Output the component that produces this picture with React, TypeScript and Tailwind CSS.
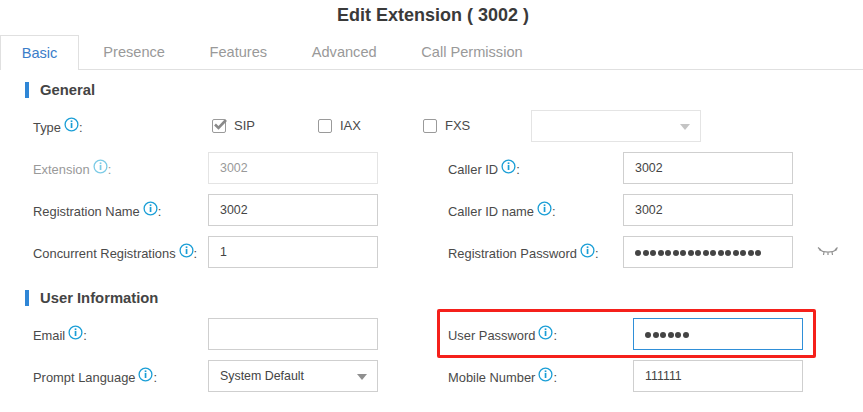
import type { ReactNode } from 'react';

const tabs = ['Basic', 'Presence', 'Features', 'Advanced', 'Call Permission'];

function InfoIcon({ faded }: { faded?: boolean }) {
  return (
    <svg width="15" height="15" viewBox="0 0 15 15" className={`ml-[3px] -translate-y-[3px] shrink-0 ${faded ? 'text-[#7ccbe6]' : 'text-[#1a9ed6]'}`} fill="none">
      <circle cx="7.5" cy="7.5" r="6.4" stroke="currentColor" strokeWidth="1.3" />
      <rect x="6.7" y="3.4" width="1.7" height="1.7" fill="currentColor" />
      <rect x="6.7" y="6" width="1.7" height="5" fill="currentColor" />
    </svg>
  );
}

function Label({ text, width, faded }: { text: string; width: string; faded?: boolean }) {
  return (
    <label className={`flex translate-y-[2px] items-center text-[12.9px] ${width} ${faded ? 'text-[#999]' : 'text-[#4a4a4a]'}`}>
      <span>{text}</span>
      <InfoIcon faded={faded} />
      <span>:</span>
    </label>
  );
}

function Field({ value, faded, focused, children }: { value?: string; faded?: boolean; focused?: boolean; children?: ReactNode }) {
  const border = focused ? 'border-[#2f8fd8]' : faded ? 'border-[#e4e4e4]' : 'border-[#cfcfcf]';
  return (
    <div className={`flex h-8 w-[170px] items-center border px-[11px] pt-px text-[12.4px] ${border} ${faded ? 'text-[#999]' : 'text-[#444]'}`}>
      {value}
      {children}
    </div>
  );
}

function Dots({ count }: { count: number }) {
  return (
    <div className="flex gap-[1.5px]">
      {Array.from({ length: count }).map((_, i) => (
        <span key={i} className="size-[6px] rounded-full bg-[#444]" />
      ))}
    </div>
  );
}

function Arrow({ light }: { light?: boolean }) {
  return (
    <span className={`ml-auto -mr-px border-x-[5px] border-t-[6px] border-x-transparent ${light ? 'border-t-[#c4c4c4]' : 'border-t-[#8f8f8f]'}`} />
  );
}

function Check({ label, checked, width }: { label: string; checked?: boolean; width: string }) {
  return (
    <div className={`flex items-center gap-2 text-[13px] text-[#4a4a4a] ${width}`}>
      <span className="relative size-[14px] rounded-[2px] border-[1.5px] border-[#9a9a9a]">
        {checked && (
          <svg width="16" height="14" viewBox="0 0 16 14" className="absolute -top-[2px] -left-px" fill="none">
            <path d="M3 6.5 L6.5 10 L14 2" stroke="#8a8a8a" strokeWidth="2.6" />
          </svg>
        )}
      </span>
      {label}
    </div>
  );
}

function Heading({ text }: { text: string }) {
  return (
    <div className="ml-[25px] flex h-4 items-center gap-[11px]">
      <span className="h-4 w-1 bg-[#2f86d6]" />
      <h2 className="text-[14.8px] font-bold text-[#444]">{text}</h2>
    </div>
  );
}

function EyeClosed() {
  return (
    <svg width="22" height="12" viewBox="0 0 22 12" className="ml-[24px]" fill="none" stroke="#8f8f8f" strokeWidth="1.2">
      <path d="M2 3.5 C7 7 15 7 20 3.5" />
      <path d="M1 1.5 L4 4 M20.5 1.5 L18 4 M7 6 L6.5 9 M15 6 L15.5 9 M11 6.5 V9" />
    </svg>
  );
}

export default function App() {
  return (
    <div className="h-[412px] w-[863px] overflow-hidden bg-white font-['Liberation_Sans',Arial,sans-serif]">
      <h1 className="flex h-[35px] items-center justify-center pb-[4px] pl-[3px] text-[18px] font-bold text-[#3a3a3a]">Edit Extension ( 3002 )</h1>

      <nav className="flex h-[35px] border-b border-[#e0e0e0] text-[14.6px] text-[#999]">
        {tabs.map((tab, i) => (
          <div
            key={tab}
            className={
              i === 0
                ? '-mb-px mr-[2px] flex w-[79px] items-center justify-center border border-b-0 border-[#e0e0e0] bg-white pt-[2px] text-[#3b7dc9]'
                : 'flex items-center px-[22.3px] pt-[2px]'
            }
          >
            {tab}
          </div>
        ))}
      </nav>

      <section className="mt-3 flex flex-col">
        <Heading text="General" />

        <div className="mt-3 flex h-8 items-center pl-[33px]">
          <Label text="Type" width="w-[179px]" />
          <Check label="SIP" checked width="w-[106px]" />
          <Check label="IAX" width="w-[105px]" />
          <Check label="FXS" width="w-[108px]" />
          <Field faded>
            <Arrow light />
          </Field>
        </div>

        <div className="mt-[10px] flex flex-col gap-[10px] pl-[33px]">
          <div className="flex items-center">
            <Label text="Extension" width="w-[175px]" faded />
            <Field value="3002" faded />
            <div className="w-[70px]" />
            <Label text="Caller ID" width="w-[175px]" />
            <Field value="3002" />
          </div>
          <div className="flex items-center">
            <Label text="Registration Name" width="w-[175px]" />
            <Field value="3002" />
            <div className="w-[70px]" />
            <Label text="Caller ID name" width="w-[175px]" />
            <Field value="3002" />
          </div>
          <div className="flex items-center">
            <Label text="Concurrent Registrations" width="w-[175px]" />
            <Field value="1" />
            <div className="w-[70px]" />
            <Label text="Registration Password" width="w-[175px]" />
            <Field>
              <Dots count={17} />
            </Field>
            <EyeClosed />
          </div>
        </div>
      </section>

      <section className="mt-[22px] flex flex-col">
        <Heading text="User Information" />

        <div className="mt-3 flex flex-col gap-[10px] pl-[33px]">
          <div className="flex items-center">
            <Label text="Email" width="w-[175px]" />
            <Field />
            <div className="w-[70px]" />
            <div className="relative flex items-center">
              <Label text="User Password" width="w-[185px]" />
              <Field focused>
                <Dots count={6} />
              </Field>
              {/* red callout around the row */}
              <div className="absolute -top-[9px] -right-[13px] -bottom-[8px] -left-[11px] rounded-[2px] border-[3px] border-[#f5201b]" />
            </div>
          </div>
          <div className="flex items-center">
            <Label text="Prompt Language" width="w-[175px]" />
            <Field value="System Default">
              <Arrow />
            </Field>
            <div className="w-[70px]" />
            <Label text="Mobile Number" width="w-[185px]" />
            <Field value="111111" />
          </div>
        </div>
      </section>
    </div>
  );
}
